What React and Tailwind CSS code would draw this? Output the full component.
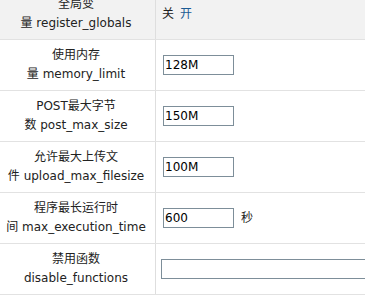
import React from "react";

const rows = [
  { l1: "使用内存", l2: "量 memory_limit", value: "128M" },
  { l1: "POST最大字节", l2: "数 post_max_size", value: "150M" },
  { l1: "允许最大上传文", l2: "件 upload_max_filesize", value: "100M" },
  { l1: "程序最长运行时", l2: "间 max_execution_time", value: "600", suffix: "秒" },
];

export default function App() {
  return (
    <div className="w-[365px] h-[297px] overflow-hidden bg-white font-['DejaVu_Sans','Noto_Sans_CJK_SC',sans-serif] text-[12px] text-[#222]">
      <div className="-mt-[12px]">
        <div className="grid grid-cols-[156px_1fr] h-[52px] bg-[#f2f2f2] border-b border-[#e2e2e2]">
          <div className="flex flex-col items-center justify-center leading-[19px] border-r border-[#dedede] pr-[3px]">
            <span>全局变</span>
            <span>量 register_globals</span>
          </div>
          <div className="flex items-center pl-[6px] gap-[6px]">
            <span>关</span>
            <span className="text-[#1b5b94]">开</span>
          </div>
        </div>
        {rows.map((r) => (
          <div key={r.value} className="grid grid-cols-[156px_1fr] h-[51px] border-b border-[#e2e2e2]">
            <div className="flex flex-col items-center justify-center leading-[19px] border-r border-[#dedede] pr-[3px]">
              <span>{r.l1}</span>
              <span>{r.l2}</span>
            </div>
            <div className="flex items-center pl-[7px]">
              <input
                defaultValue={r.value}
                className="w-[71px] h-[20px] border border-[#7d8e99] px-[1px] text-[12px] text-black bg-white outline-none font-['DejaVu_Sans',sans-serif]"
              />
              {r.suffix && <span className="ml-[7px]">{r.suffix}</span>}
            </div>
          </div>
        ))}
        <div className="grid grid-cols-[156px_1fr] h-[51px] border-b border-[#e2e2e2]">
          <div className="flex flex-col items-center justify-center leading-[19px] border-r border-[#dedede] pr-[3px]">
            <span>禁用函数</span>
            <span>disable_functions</span>
          </div>
          <div className="flex items-center pl-[5px] overflow-hidden">
            <input
              defaultValue=""
              className="w-[260px] shrink-0 h-[20px] border border-[#7d8e99] bg-white outline-none"
            />
          </div>
        </div>
      </div>
    </div>
  );
}
